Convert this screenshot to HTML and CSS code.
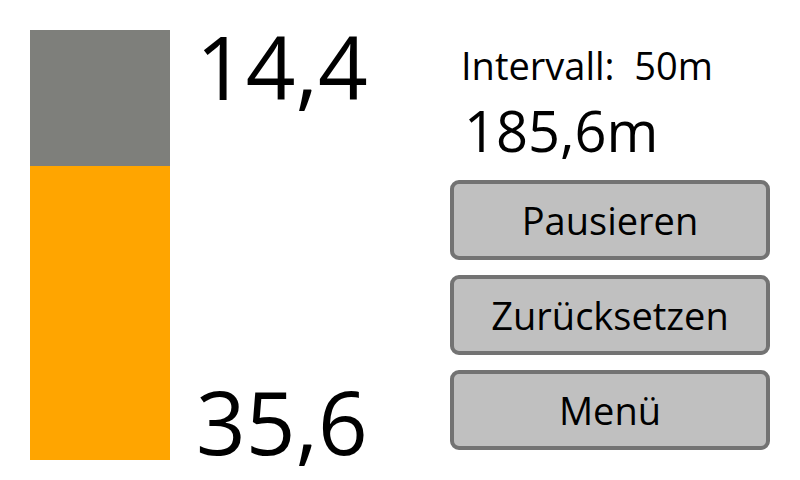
FILE: index.html
```html
<!DOCTYPE html>
<html lang="de">

<head>
    <meta charset="UTF-8">
    <title>Messung</title>
    <link rel="stylesheet" href="styles.css">
</head>

<body>
    <main class="screen">
        <!-- Fill level gauge -->
        <div class="gauge">
            <div class="gauge-empty" style="height: 136px"></div>
            <div class="gauge-fill"></div>
        </div>

        <div class="readings">
            <div class="reading top">14,4</div>
            <div class="reading bottom">35,6</div>
        </div>

        <!-- Controls -->
        <section class="panel">
            <p class="interval">Intervall:&nbsp; 50m</p>
            <p class="distance">185,6m</p>
            <div class="buttons">
                <button class="btn">Pausieren</button>
                <button class="btn">Zurücksetzen</button>
                <button class="btn">Menü</button>
            </div>
        </section>
    </main>
</body>

</html>
```

FILE: styles.css
```css
* {
    margin: 0;
    padding: 0;
    box-sizing: border-box;
}

body {
    background: #fff;
    font-family: 'Open Sans', sans-serif;
    color: #000;
}

.screen {
    display: flex;
    width: 800px;
    height: 480px;
    padding: 30px 30px 20px 30px;
}

/* Gauge */
.gauge {
    display: flex;
    flex-direction: column;
    width: 140px;
    height: 430px;
}

.gauge-empty {
    background-color: #7e7f7b;
}

.gauge-fill {
    flex: 1;
    background-color: #ffa500;
}

.readings {
    display: flex;
    flex-direction: column;
    justify-content: space-between;
    width: 280px;
    padding-left: 26px;
}

.reading {
    font-size: 87px;
    line-height: 1;
}

.reading.top {
    margin-top: -7px;
}

.reading.bottom {
    margin-bottom: -5px;
}

/* Right panel */
.panel {
    display: flex;
    flex-direction: column;
    width: 320px;
}

.interval {
    font-size: 38px;
    line-height: 1;
    padding: 16px 0 0 11px;
}

.distance {
    font-size: 56px;
    line-height: 1;
    padding: 18px 0 0 14px;
    margin-bottom: 22px;
}

.buttons {
    display: flex;
    flex-direction: column;
    gap: 15px;
}

.btn {
    flex-shrink: 0;
    height: 80px;
    background-color: #c0c0c0;
    border: 4px solid #737373;
    border-radius: 9px;
    font-family: inherit;
    font-size: 38px;
    color: #000;
}
```
